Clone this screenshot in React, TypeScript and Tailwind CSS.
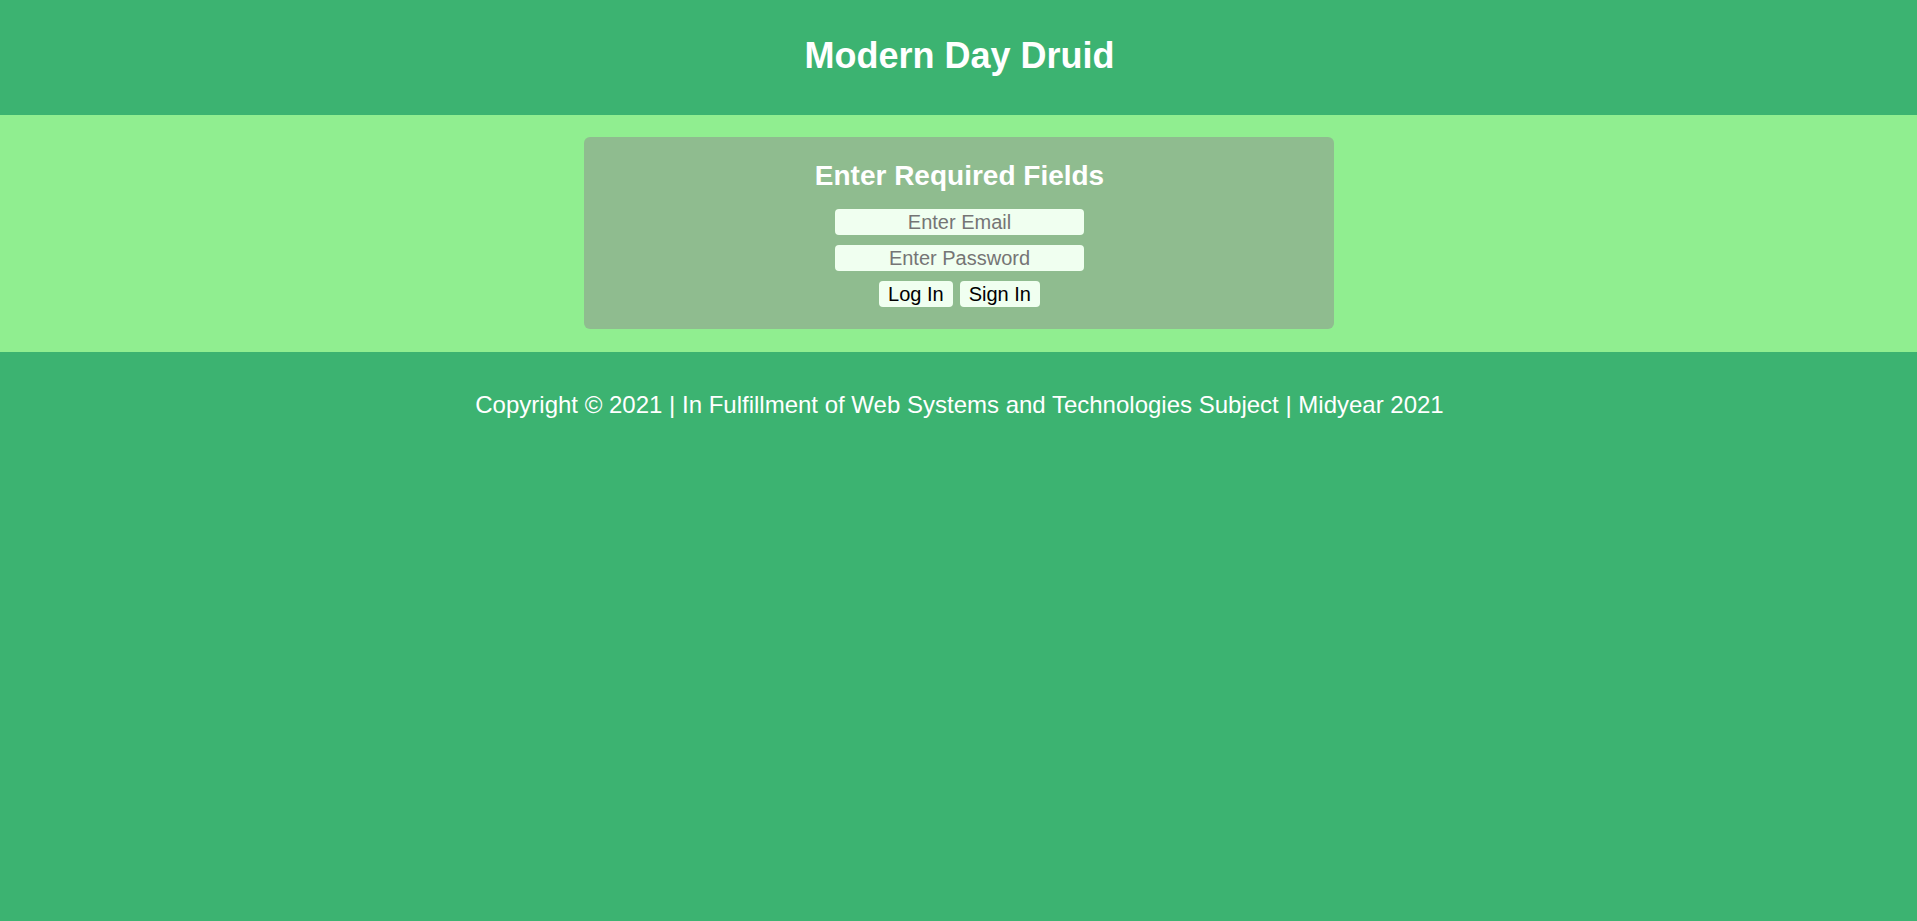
export default function App() {
  return (
    <div
      className="min-h-screen bg-[#3cb371] text-white pl-[2px]"
      style={{ fontFamily: '"Liberation Sans", Arial, sans-serif' }}
    >
      {/* HEADER */}
      <header className="h-[115px] pt-[35px] text-center">
        <h1 className="text-[36px] leading-[41px] font-bold">Modern Day Druid</h1>
      </header>

      {/* LOGIN BAND */}
      <main className="bg-[#90ee90] -ml-[2px] pt-[22px] pb-[23px] flex justify-center">
        <div className="w-[750px] rounded-[6px] bg-[#8fbc8f] pl-[2px] pt-[23px] pb-[22px] flex flex-col items-center">
          <h2 className="text-[28px] leading-[32px] font-bold">Enter Required Fields</h2>
          <form className="mt-[17px] flex flex-col items-center gap-[10px]" onSubmit={e => e.preventDefault()}>
            <input
              type="email"
              placeholder="Enter Email"
              className="w-[249px] h-[26px] rounded-[4px] bg-[#f0fff0] text-[20px] text-center text-black placeholder:text-[#757575] outline-none"
            />
            <input
              type="password"
              placeholder="Enter Password"
              className="w-[249px] h-[26px] rounded-[4px] bg-[#f0fff0] text-[20px] text-center text-black placeholder:text-[#757575] outline-none"
            />
            <div className="flex gap-[7px]">
              <button className="h-[26px] px-[9px] rounded-[4px] bg-[#f0fff0] text-[20px] leading-[26px] text-black">
                Log In
              </button>
              <button className="h-[26px] px-[9px] rounded-[4px] bg-[#f0fff0] text-[20px] leading-[26px] text-black">
                Sign In
              </button>
            </div>
          </form>
        </div>
      </main>

      {/* FOOTER */}
      <footer className="pt-[39px] text-center">
        <p className="text-[24px] leading-[28px]">
          Copyright © 2021 | In Fulfillment of Web Systems and Technologies Subject | Midyear 2021
        </p>
      </footer>
    </div>
  );
}
